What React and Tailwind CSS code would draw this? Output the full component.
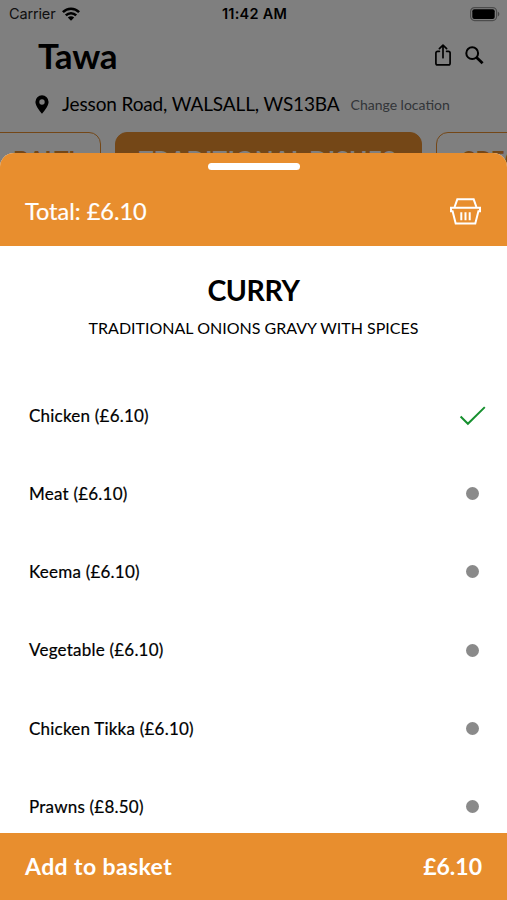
import React from 'react';

const categories = [
  { name: 'BALTI', box: 'w-[126px] pl-[37px]', text: 'tracking-[-0.4px]' },
  { name: 'TRADITIONAL DISHES', box: 'w-[307px] pl-[23px]', text: 'tracking-[0.4px]', active: true },
  { name: 'SPECIALS', box: 'w-[170px] pl-[25px]', text: 'tracking-[0.4px]' },
];

const options = [
  { name: 'Chicken', price: '6.10', selected: true },
  { name: 'Meat', price: '6.10' },
  { name: 'Keema', price: '6.10' },
  { name: 'Vegetable', price: '6.10' },
  { name: 'Chicken Tikka', price: '6.10' },
  { name: 'Prawns', price: '8.50' },
];

const WifiIcon = () => (
  <svg width="18" height="14" viewBox="0 0 18 14" fill="none" stroke="black" strokeWidth="2.5">
    <path d="M.9 5.2C5.4.5 12.6.5 17.1 5.2" />
    <path d="M3.8 8.4c2.9-3 7.5-3 10.4 0" />
    <path d="M9 13.8 5.8 10.5c1.8-1.7 4.6-1.7 6.4 0Z" fill="black" stroke="none" />
  </svg>
);

const BatteryIcon = () => (
  <svg width="30" height="15" viewBox="0 0 30 15" fill="none">
    <rect x=".6" y=".6" width="26" height="13" rx="4" stroke="black" strokeOpacity=".4" strokeWidth="1.2" />
    <rect x="2.3" y="2.3" width="22.4" height="9.600" rx="2" fill="black" />
    <path d="M27.900 4.800c1.900.7 1.900 3.900 0 4.600Z" fill="black" fillOpacity=".45" />
  </svg>
);

const PinIcon = () => (
  <svg width="14" height="19" viewBox="0 0 14 19">
    <path
      fillRule="evenodd"
      d="M7 .3A6.600 6.600 0 0 0 .4 6.900C.4 11.500 7 18.600 7 18.600s6.600-7.100 6.600-11.700A6.600 6.600 0 0 0 7 .3Zm0 4a2.700 2.700 0 1 1 0 5.400 2.700 2.700 0 0 1 0-5.400Z"
    />
  </svg>
);

const ShareIcon = () => (
  <svg width="16" height="22" viewBox="0 0 16 22" fill="none" stroke="black" strokeWidth="1.7" strokeLinecap="round" strokeLinejoin="round">
    <path d="M4.400 7.300H2.600A1.700 1.700 0 0 0 .9 9v10.200c0 1 .7 1.700 1.700 1.700h10.800c1 0 1.700-.7 1.700-1.700V9c0-1-.7-1.700-1.700-1.700H11.600" />
    <path d="M8 13.700V1.300M4.400 4.600 8 1.100l3.600 3.500" />
  </svg>
);

const SearchIcon = () => (
  <svg width="19" height="19" viewBox="0 0 19 19" fill="none" stroke="black">
    <circle cx="7.200" cy="7.200" r="5.900" strokeWidth="2" />
    <path d="m11.600 11.400 6 5.800" strokeWidth="2.800" />
  </svg>
);

const BasketIcon = () => (
  <svg width="31" height="27" viewBox="0 0 31 27" fill="none" stroke="white" strokeWidth="2">
    <path d="M4.600 9 7.300 1.300h16.400L26.400 9" />
    <path d="M1 9.800h29v3.500h-1.600L25.300 25.500H5.700L2.600 13.300H1Z" />
    <path d="M11.300 14.300v8M15.500 14.300v8M19.700 14.300v8" />
  </svg>
);

const OptionRow = ({ option }) => (
  <li className="flex h-[78.2px] items-center justify-between pl-[29px] pr-[21px]">
    <span className="text-[17px] tracking-[0.22px] [-webkit-text-stroke:0.2px]">
      {option.name} (£{option.price})
    </span>
    <span className="flex w-[27px] justify-center">
      {option.selected ? (
        <svg className="shrink-0" width="27" height="20" viewBox="0 0 27 20" fill="none" stroke="#16902f" strokeWidth="2">
          <path d="m1.600 10.500 7.300 7.300L25.800 1.100" />
        </svg>
      ) : (
        <span className="size-[13px] rounded-full bg-[#8a8a8a]" />
      )}
    </span>
  </li>
);

// Restaurant page that sits dimmed behind the sheet
const MenuPage = () => (
  <div className="h-full bg-white text-black">
    <div className="grid h-7 grid-cols-3 items-center pl-[9px] pr-[7px] font-['Inter',sans-serif] text-[14.5px]">
      <div className="flex items-center gap-[7px]">
        <span className="tracking-[-0.15px] text-[#222]">Carrier</span>
        <WifiIcon />
      </div>
      <span className="text-center font-semibold tracking-[0.25px]">11:42 AM</span>
      <div className="flex justify-end">
        <BatteryIcon />
      </div>
    </div>
    <div className="flex h-[54px] items-center pl-[38px] pr-[23px]">
      <h1 className="flex-1 text-[35px] font-bold leading-none tracking-[-0.3px]">Tawa</h1>
      <div className="flex items-center gap-[14px]">
        <ShareIcon />
        <SearchIcon />
      </div>
    </div>
    <div className="flex h-[50px] items-center whitespace-nowrap pb-[5px] pl-[35px]">
      <PinIcon />
      <span className="ml-[13px] text-[19px] tracking-[-0.13px]">Jesson Road, WALSALL, WS13BA</span>
      <span className="ml-[11px] text-[14px] text-[#666b73]">Change location</span>
    </div>
    <div className="-ml-[25px] flex gap-[14px]">
      {categories.map((category) => (
        <div
          key={category.name}
          className={`h-[54px] shrink-0 whitespace-nowrap rounded-xl border border-[#e88e2e] pt-[11px] text-2xl font-bold ${category.box} ${category.text} ${
            category.active ? 'bg-[#e88e2e] text-white' : 'text-[#e88e2e]'
          }`}
        >
          {category.name}
        </div>
      ))}
    </div>
  </div>
);

const OptionsSheet = () => (
  <section className="absolute inset-x-0 bottom-0 flex h-[747px] flex-col overflow-hidden rounded-t-[14px] bg-white text-black">
    <header className="h-[93px] shrink-0 bg-[#e88e2e] pt-2.5 text-white">
      <div className="mx-auto h-[7px] w-[92px] rounded-full bg-white" />
      <div className="flex items-center justify-between pl-[25px] pr-[26px] pt-[25px]">
        <span className="text-[23.5px] leading-8 [-webkit-text-stroke:0.2px]">Total: £6.10</span>
        <BasketIcon />
      </div>
    </header>
    <div className="min-h-0 flex-1 overflow-hidden text-center">
      <h2 className="pt-[26px] text-[28.5px] font-bold leading-9 tracking-[-0.4px]">CURRY</h2>
      <p className="mt-2 text-[16px] leading-6">TRADITIONAL ONIONS GRAVY WITH SPICES</p>
      <ul className="mt-[36.5px] text-left">
        {options.map((option) => (
          <OptionRow key={option.name} option={option} />
        ))}
      </ul>
    </div>
    <button className="flex h-[67px] shrink-0 items-center justify-between bg-[#e88e2e] px-[25px] text-[23px] font-bold text-white">
      <span className="tracking-[0.4px]">Add to basket</span>
      <span>£6.10</span>
    </button>
  </section>
);

const App = () => (
  <main className="relative h-[900px] w-[507px] overflow-hidden font-['Lato',sans-serif]">
    <MenuPage />
    <div className="absolute inset-0 bg-black/50" />
    <OptionsSheet />
  </main>
);

export default App;
